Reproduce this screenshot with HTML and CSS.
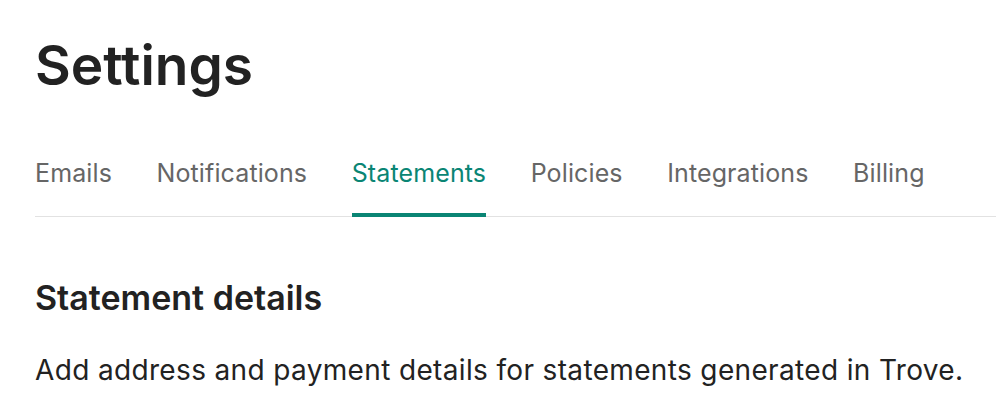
FILE: index.html
```html
<!DOCTYPE html>
<html lang="en">
<head>
<meta charset="utf-8">
<title>Settings</title>
<link rel="stylesheet" href="styles.css">
</head>
<body>
<main class="page">
  <h1 class="title">Settings</h1>
  <nav class="tabs">
    <a class="tab">Emails</a>
    <a class="tab">Notifications</a>
    <a class="tab tab-active">Statements</a>
    <a class="tab">Policies</a>
    <a class="tab">Integrations</a>
    <a class="tab">Billing</a>
  </nav>
  <section class="section">
    <h2 class="section-title">Statement details</h2>
    <p class="section-text">Add address and payment details for statements generated in Trove.</p>
  </section>
</main>
</body>
</html>
```

FILE: styles.css
```css
* { box-sizing: border-box; }
html, body {
  margin: 0;
  padding: 0;
  background: #ffffff;
}
body {
  font-family: Inter, "Noto Sans", sans-serif;
  color: #222222;
}
.page {
  padding: 32px 0 0 35px;
}
.title {
  margin: 0;
  font-size: 55px;
  font-weight: 600;
  line-height: 66px;
  color: #222222;
}
.tabs {
  display: flex;
  gap: 44.5px;
  margin-top: 59px;
  border-bottom: 1px solid #e2e2e2;
}
.tab {
  font-size: 25px;
  line-height: 32px;
  letter-spacing: 0.12px;
  color: #666666;
  padding-bottom: 24px;
  border-bottom: 4px solid transparent;
  margin-bottom: -1px;
}
.tab-active {
  color: #0a8574;
  border-bottom-color: #0a8574;
}
.section {
  padding-top: 59px;
}
.section-title {
  margin: 0;
  font-size: 34px;
  font-weight: 600;
  line-height: 44px;
  color: #222222;
}
.section-text {
  margin: 30px 0 0;
  font-size: 28px;
  line-height: 40px;
  letter-spacing: 0.35px;
  color: #222222;
}
```
